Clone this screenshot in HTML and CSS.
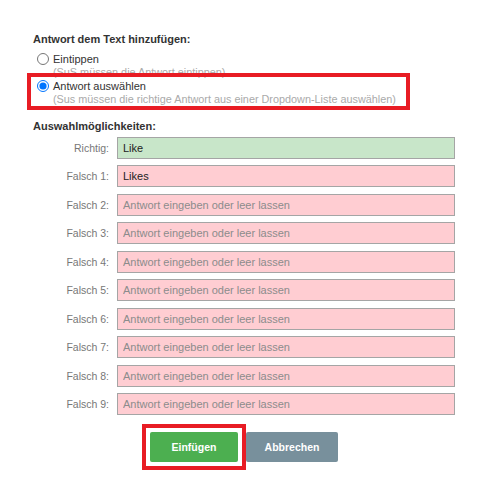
FILE: index.html
```html
<!DOCTYPE html>
<html lang="de">
<head>
    <meta charset="UTF-8">
    <title>Antwort hinzufügen</title>
    <link rel="stylesheet" href="styles.css">
</head>
<body>

    <div class="dialog">
        <div class="section-title">Antwort dem Text hinzufügen:</div>

        <div class="options">
            <label class="option">
                <input type="radio" name="mode" value="type">
                <span class="option-text">
                    <span class="option-main">Eintippen</span>
                    <span class="option-sub">(SuS müssen die Antwort eintippen)</span>
                </span>
            </label>

            <!-- markiert -->
            <div class="highlight">
                <label class="option">
                    <input type="radio" name="mode" value="select" checked>
                    <span class="option-text">
                        <span class="option-main">Antwort auswählen</span>
                        <span class="option-sub">(Sus müssen die richtige Antwort aus einer Dropdown-Liste auswählen)</span>
                    </span>
                </label>
            </div>
        </div>

        <div class="section-title choices-title">Auswahlmöglichkeiten:</div>

        <div class="choices">
            <label class="choice-label">Richtig:</label>
            <input class="choice-input correct" type="text" value="Like">

            <label class="choice-label">Falsch 1:</label>
            <input class="choice-input wrong" type="text" value="Likes">

            <label class="choice-label">Falsch 2:</label>
            <input class="choice-input wrong" type="text" placeholder="Antwort eingeben oder leer lassen">

            <label class="choice-label">Falsch 3:</label>
            <input class="choice-input wrong" type="text" placeholder="Antwort eingeben oder leer lassen">

            <label class="choice-label">Falsch 4:</label>
            <input class="choice-input wrong" type="text" placeholder="Antwort eingeben oder leer lassen">

            <label class="choice-label">Falsch 5:</label>
            <input class="choice-input wrong" type="text" placeholder="Antwort eingeben oder leer lassen">

            <label class="choice-label">Falsch 6:</label>
            <input class="choice-input wrong" type="text" placeholder="Antwort eingeben oder leer lassen">

            <label class="choice-label">Falsch 7:</label>
            <input class="choice-input wrong" type="text" placeholder="Antwort eingeben oder leer lassen">

            <label class="choice-label">Falsch 8:</label>
            <input class="choice-input wrong" type="text" placeholder="Antwort eingeben oder leer lassen">

            <label class="choice-label">Falsch 9:</label>
            <input class="choice-input wrong" type="text" placeholder="Antwort eingeben oder leer lassen">
        </div>

        <div class="actions">
            <div class="highlight-button">
                <button class="btn btn-insert">Einfügen</button>
            </div>
            <button class="btn btn-cancel">Abbrechen</button>
        </div>
    </div>

</body>
</html>
```

FILE: styles.css
```css
body {
    margin: 20px;
    background-color: #fff;
    font-family: "Liberation Sans", Arial, sans-serif;
    font-size: 11px;
    color: #333;
}

.dialog {
    width: 448px;
    box-sizing: border-box;
    padding: 12px 13px 11px 13px;
    background-color: #fff;
    box-shadow: 0 0 16px rgba(0, 0, 0, 0.55);
}

.section-title {
    font-size: 11px;
    font-weight: bold;
    line-height: 14px;
    color: #333;
}

.options {
    margin-top: 6px;
}

.option {
    display: flex;
    align-items: flex-start;
    padding-left: 4px;
}

.option input {
    width: 12px;
    height: 12px;
    margin: 1px 4px 0 0;
}

.option-text {
    display: flex;
    flex-direction: column;
    white-space: nowrap;
}

.option-main {
    font-size: 11px;
    line-height: 14px;
    color: #333;
}

.option-sub {
    font-size: 10.85px;
    line-height: 13px;
    color: #aaa;
}

.highlight {
    position: relative;
    margin: -6px 45px 0 -6px;
    padding: 2px 0 0 2px;
    border: 4px solid #e81c24;
}

.choices-title {
    margin-top: 9px;
}

.choices {
    display: grid;
    grid-template-columns: 76px 1fr;
    column-gap: 8px;
    row-gap: 6.45px;
    margin-top: 4px;
}

.choice-label {
    align-self: center;
    text-align: right;
    font-size: 10.5px;
    color: #777;
}

.choice-input {
    height: 22px;
    box-sizing: border-box;
    margin: 0;
    padding: 0 5px;
    border: 1px solid #a5a5a5;
    font-family: "Liberation Sans", Arial, sans-serif;
    font-size: 11px;
    color: #222;
    outline: none;
}

.choice-input::placeholder {
    color: #8c8c8c;
}

.correct {
    background-color: #c8e6c9;
}

.wrong {
    background-color: #ffcdd2;
}

.actions {
    display: flex;
    justify-content: center;
    gap: 8px;
    margin-top: 17px;
}

.highlight-button {
    position: relative;
    margin: -8px;
    padding: 4px;
    border: 4px solid #e81c24;
    display: flex;
}

.btn {
    height: 30px;
    padding: 0;
    border: none;
    border-radius: 2px;
    font-family: "Liberation Sans", Arial, sans-serif;
    font-size: 10.5px;
    font-weight: bold;
    color: #fff;
    cursor: pointer;
}

.btn-insert {
    width: 88px;
    background-color: #4caf50;
}

.btn-cancel {
    width: 92px;
    background-color: #78909c;
}
```
